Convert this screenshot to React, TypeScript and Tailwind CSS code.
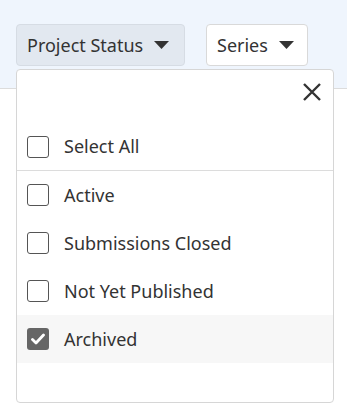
import React from 'react';

const items = [
  { label: 'Active', checked: false },
  { label: 'Submissions Closed', checked: false },
  { label: 'Not Yet Published', checked: false },
  { label: 'Archived', checked: true },
];

function Caret() {
  return (
    <svg width="15" height="8" viewBox="0 0 15 8" className="ml-[11px]">
      <path d="M0 0 L15 0 L7.5 8 Z" fill="#333" />
    </svg>
  );
}

function Checkbox({ checked }: { checked: boolean }) {
  if (checked) {
    return (
      <span className="flex h-[22px] w-[22px] shrink-0 items-center justify-center rounded-[3px] bg-[#666]">
        <svg width="14" height="12" viewBox="0 0 14 12">
          <path d="M1.5 6.5 L5 10 L12.5 2" fill="none" stroke="#fff" strokeWidth="2.8" strokeLinecap="round" strokeLinejoin="round" />
        </svg>
      </span>
    );
  }
  return <span className="block h-[22px] w-[22px] shrink-0 rounded-[3px] border border-[#555] bg-white" />;
}

export default function App() {
  return (
    <div className="relative h-[404px] w-[347px] overflow-hidden bg-white text-[#333]" style={{ fontFamily: '"Noto Sans", sans-serif' }}>
      <div className="flex h-[89px] items-start gap-[21px] border-b border-[#dcdcdc] bg-[#eff5fd] pl-4 pt-6">
        <button className="flex h-[42px] w-[169px] items-center rounded-[4px] border border-[#d6dce4] bg-[#e2e8f0] pl-[10px] text-[18px]">
          Project Status
          <Caret />
        </button>
        <button className="flex h-[42px] w-[102px] items-center rounded-[4px] border border-[#d9d9d9] bg-white pl-[10px] text-[18px]">
          Series
          <Caret />
        </button>
      </div>

      {/* dropdown menu */}
      <div className="absolute left-4 top-[69px] flex h-[334px] w-[318px] flex-col rounded-[4px] border border-[#d6d6d6] bg-white">
        <div className="flex h-[53px] items-start justify-end pr-[11px] pt-[12px]">
          <svg width="20" height="20" viewBox="0 0 20 20">
            <path d="M2 2 L18 18 M18 2 L2 18" stroke="#333" strokeWidth="2.4" />
          </svg>
        </div>
        <div className="flex h-[48px] items-center gap-[15px] border-b border-[#dcdcdc] pl-[10px] text-[18px]">
          <Checkbox checked={false} />
          <span>Select All</span>
        </div>
        {items.map(item => (
          <div
            key={item.label}
            className={`flex h-[48px] items-center gap-[15px] pl-[10px] text-[18px] ${item.checked ? 'bg-[#f7f7f7]' : ''}`}
          >
            <Checkbox checked={item.checked} />
            <span>{item.label}</span>
          </div>
        ))}
      </div>
    </div>
  );
}
